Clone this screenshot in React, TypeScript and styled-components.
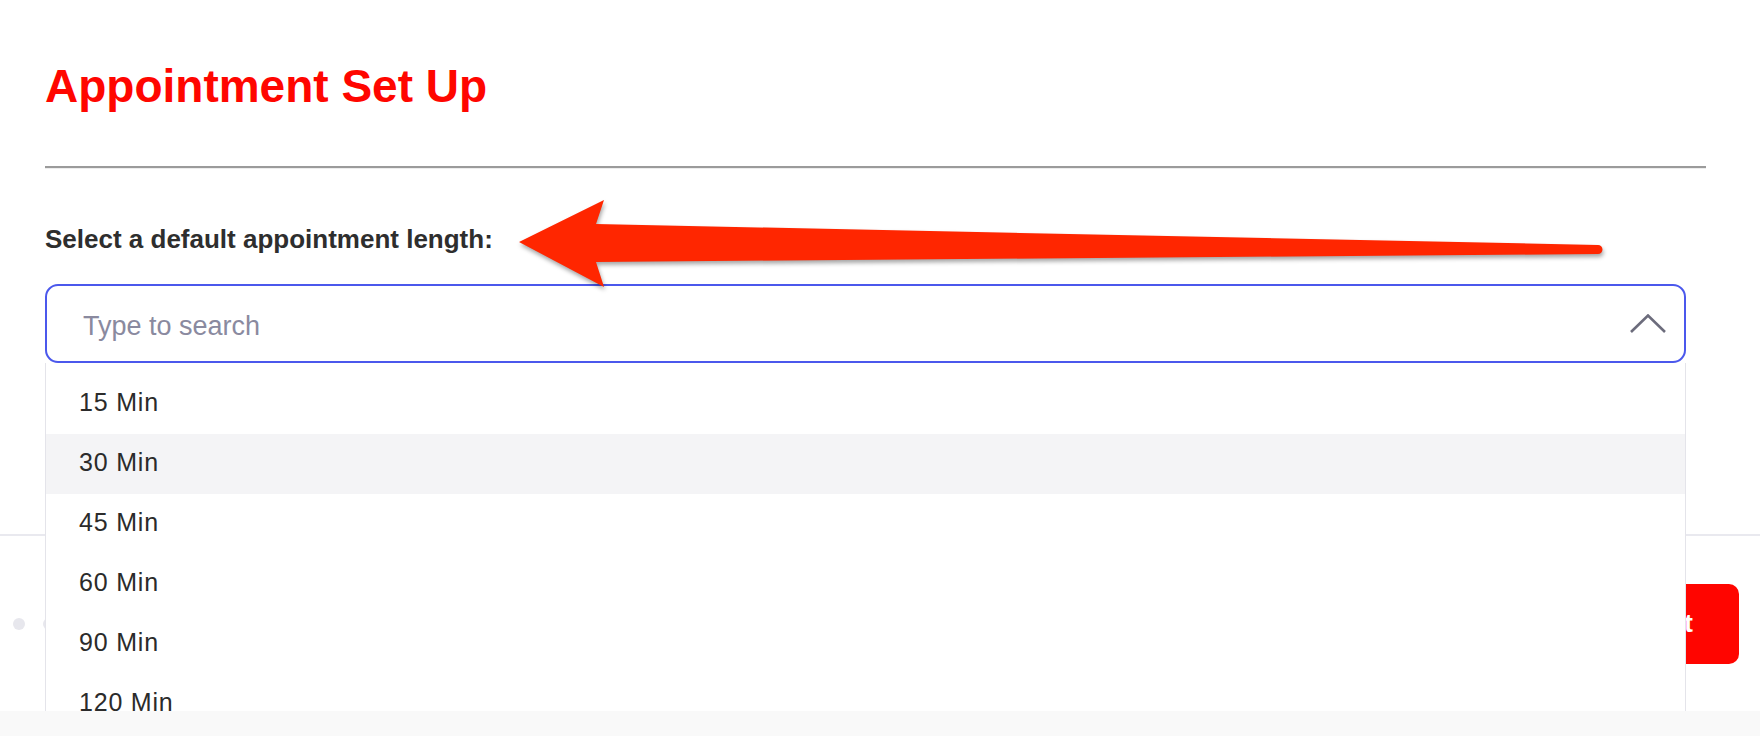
import React from 'react';
import styled, { createGlobalStyle } from 'styled-components';

const GlobalStyle = createGlobalStyle`
  html, body {
    margin: 0;
    padding: 0;
    background: #f9f9f9;
  }
  body {
    font-family: "Liberation Sans", Arial, sans-serif;
  }
  * {
    box-sizing: border-box;
  }
`;

const Modal = styled.div`
  position: relative;
  height: 711px;
  background: #fff;
  display: flex;
  flex-direction: column;
  overflow: hidden;
`;

const Content = styled.div`
  flex: 1;
  padding: 63px 54px 0 45px;
`;

const Title = styled.h1`
  margin: 0;
  font-size: 46px;
  line-height: 1;
  font-weight: 700;
  color: #ff0600;
`;

const Divider = styled.hr`
  margin: 57px 0 0;
  height: 0;
  border: 0;
  border-top: 2px solid #9b9b9b;
  border-bottom: 1px solid #ededed;
`;

const Label = styled.label`
  display: block;
  margin-top: 57px;
  font-size: 26px;
  line-height: 1;
  font-weight: 700;
  color: #2e2e2e;
`;

const SelectWrapper = styled.div`
  position: relative;
  margin: 32px 20px 0 0;
  z-index: 2;
`;

const SearchBox = styled.div`
  display: flex;
  align-items: center;
  height: 79px;
  border: 2px solid #4b58ec;
  border-radius: 13px;
  padding: 0 18px 0 36px;
  background: #fff;

  input {
    flex: 1;
    border: none;
    outline: none;
    background: transparent;
    font-family: "Liberation Sans", Arial, sans-serif;
    font-size: 27px;
    color: #2b2b2b;
    padding: 5px 0 0;
  }

  input::placeholder {
    color: #8a8a9f;
  }
`;

const Chevron = styled.svg`
  width: 36px;
  height: 20px;
  margin-top: 1px;
`;

const Menu = styled.ul`
  position: absolute;
  top: 100%;
  left: 0;
  right: 0;
  margin: 0;
  padding: 11px 0 0;
  list-style: none;
  background: #fff;
  border-left: 1px solid #e4e4ea;
  border-right: 1px solid #e4e4ea;
`;

const Option = styled.li<{ $active?: boolean }>`
  height: 60px;
  line-height: 56px;
  padding: 0 0 4px 33px;
  font-size: 25px;
  letter-spacing: 0.8px;
  color: #2b2b2b;
  background: ${(p) => (p.$active ? '#f4f4f6' : 'transparent')};
`;

const Footer = styled.div`
  height: 177px;
  border-top: 2px solid #e9e9ef;
  display: flex;
  align-items: center;
  justify-content: space-between;
  padding: 0 21px 0 13px;
`;

const Dots = styled.div`
  display: flex;
  gap: 18px;
`;

const Dot = styled.span`
  width: 12px;
  height: 12px;
  border-radius: 50%;
  background: #e7e7ed;
`;

const NextButton = styled.button`
  height: 80px;
  padding: 0 46px;
  border: none;
  border-radius: 10px;
  background: #ff0500;
  color: #fff;
  font-family: "Liberation Sans", Arial, sans-serif;
  font-size: 26px;
  font-weight: 700;
`;

const Annotation = styled.svg`
  position: absolute;
  top: 0;
  left: 0;
  width: 1760px;
  height: 711px;
  pointer-events: none;
  z-index: 3;
  filter: drop-shadow(1px 3px 2px rgba(0, 0, 0, 0.35));
`;

const lengths = ['15 Min', '30 Min', '45 Min', '60 Min', '90 Min', '120 Min'];

const App = () => {
  return (
    <>
      <GlobalStyle />
      <Modal>
        <Content>
          <Title>Appointment Set Up</Title>
          <Divider />
          <Label htmlFor="length-search">Select a default appointment length:</Label>
          <SelectWrapper>
            <SearchBox>
              <input id="length-search" placeholder="Type to search" />
              <Chevron viewBox="0 0 36 20">
                <polyline points="1,18 18,1.5 35,18" fill="none" stroke="#6c6c7c" strokeWidth="2.6" />
              </Chevron>
            </SearchBox>
            <Menu>
              {lengths.map((entry, i) => (
                <Option key={i} $active={entry === '30 Min'}>{entry}</Option>
              ))}
            </Menu>
          </SelectWrapper>
        </Content>
        <Footer>
          <Dots>
            <Dot />
            <Dot />
            <Dot />
            <Dot />
          </Dots>
          <NextButton>Next</NextButton>
        </Footer>
        <Annotation viewBox="0 0 1760 711">
          <path
            d="M519 242 L604 200 L596 224 L1598 245 A4.5 4.5 0 0 1 1598 254 L596 262 L604 287 Z"
            fill="#ff2600"
          />
        </Annotation>
      </Modal>
    </>
  );
};

export default App;
